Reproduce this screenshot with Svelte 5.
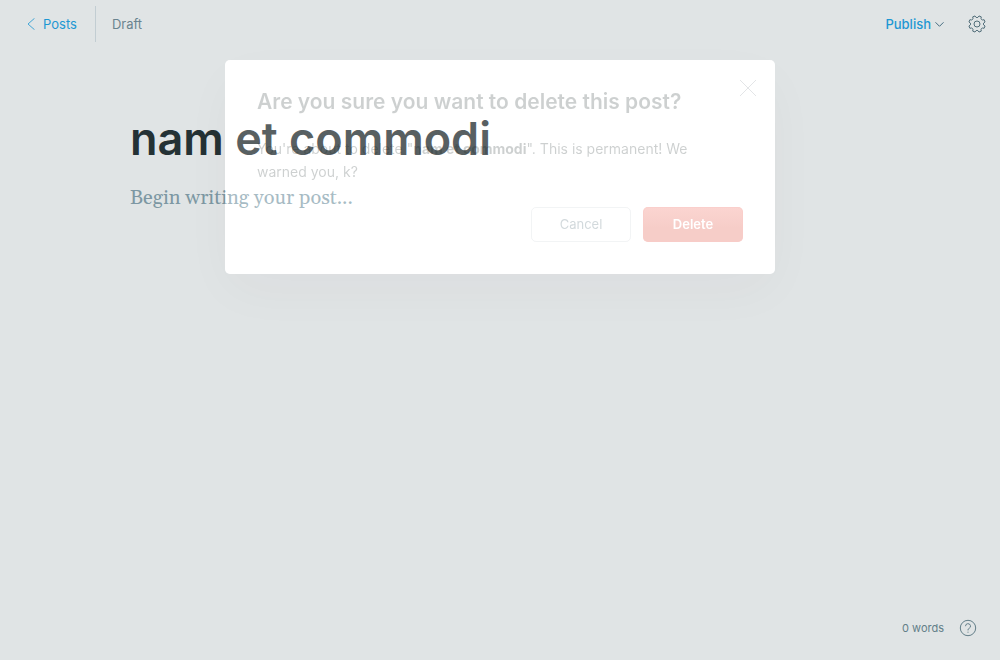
<script lang="ts">
  let title = $state('nam et commodi');
  let body = $state('');
  let open = $state(true);
  const words = $derived(body.trim() ? body.trim().split(/\s+/).length : 0);
  const close = () => (open = false);
</script>

<div class="editor">
  <header>
    <a class="back" href="#posts">
      <svg width="8" height="12" viewBox="0 0 8 12" aria-hidden="true"><path d="M7.500.3 1 6l6.500 5.700" /></svg>
      Posts
    </a>
    <span class="status">Draft</span>
    <button class="publish" type="button">
      Publish
      <svg width="9" height="6" viewBox="0 0 9 6" aria-hidden="true"><path d="m.5 1.300 4 4 4-4" /></svg>
    </button>
    <button class="settings" type="button" aria-label="Settings">
      <svg width="18" height="18" viewBox="-9 -9 18 18" aria-hidden="true">
        <path stroke-linejoin="round" d="M6.630-.93 8.050-2.010 7.110-4.270 5.350-4.030Q4.300-4.300 4.030-5.350L4.270-7.110 2.010-8.050.93-6.630Q0-6.100-.93-6.630L-2.010-8.050-4.270-7.110-4.030-5.350Q-4.300-4.300-5.350-4.030L-7.110-4.270-8.050-2.010-6.630-.93Q-6.100 0-6.630.93L-8.050 2.010-7.110 4.270-5.350 4.030Q-4.300 4.300-4.030 5.350L-4.270 7.110-2.010 8.050-.93 6.630Q0 6.100.93 6.630L2.010 8.050 4.270 7.110 4.030 5.350Q4.300 4.300 5.350 4.030L7.110 4.270 8.050 2.010 6.630.93Q6.100 0 6.630-.93Z" />
        <circle r="3" />
      </svg>
    </button>
  </header>

  <main>
    <input class="title" aria-label="Post title" bind:value={title} />
    <textarea class="body" aria-label="Post body" placeholder="Begin writing your post..." bind:value={body}></textarea>
  </main>

  <footer>
    <span>{words} words</span>
    <a href="#help" aria-label="Help">
      <svg width="18" height="18" viewBox="0 0 18 18" aria-hidden="true">
        <circle cx="9" cy="9" r="7.700" />
        <path d="M6.500 7.200a2.500 2.500 0 1 1 3.600 2.200c-.8.4-1.100.8-1.100 1.500v.5M9 12.700v1" />
      </svg>
    </a>
  </footer>
</div>

{#if open}
  <div class="overlay">
    <div class="modal" role="dialog" aria-modal="true" aria-labelledby="modal-title">
      <button class="close" type="button" aria-label="Close" onclick={close}>
        <svg width="16" height="16" viewBox="0 0 16 16" aria-hidden="true"><path d="m0 0 16 16M16 0 0 16" /></svg>
      </button>
      <h1 id="modal-title">Are you sure you want to delete this post?</h1>
      <p>You're about to delete "<strong>{title}</strong>". This is permanent! We warned you, k?</p>
      <div class="actions">
        <button class="cancel" type="button" onclick={close}>Cancel</button>
        <button class="delete" type="button" onclick={close}>Delete</button>
      </div>
    </div>
  </div>
{/if}

<style>
  :global(body) {
    margin: 0;
    background: #fff;
    color: #142022;
    font-family: Inter, 'Open Sans', sans-serif;
    font-size: 13px;
  }
  * { box-sizing: border-box; }
  button, input, textarea { font: inherit; color: inherit; margin: 0; padding: 0; border: 0; background: none; outline: 0; }
  button { cursor: pointer; }
  svg { display: block; fill: none; stroke: currentColor; }
  .editor { display: flex; flex-direction: column; min-height: 100vh; }
  header { display: flex; align-items: center; height: 48px; padding: 0 14px 0 27px; }
  .back {
    display: flex; align-items: center; gap: 8px; height: 36px; padding-right: 18px;
    border-right: 1px solid #dae3e8; color: #0c9fe9; text-decoration: none;
  }
  .back svg { opacity: 0.8; }
  .status { flex: 1; padding-left: 16px; color: #6b8793; }
  .publish { display: flex; align-items: center; gap: 4px; color: #0c9fe9; font-weight: 500; }
  .publish svg { color: #3d6880; }
  .settings { margin-left: 24px; color: #4d6b78; }
  main { display: flex; flex: 1; flex-direction: column; width: 100%; max-width: 740px; margin: 0 auto; padding-top: 62px; }
  .title { width: 100%; height: 56px; font-size: 45px; font-weight: 600; }
  .body { flex: 1; width: 100%; margin-top: 16px; resize: none; font-family: Georgia, Gelasio, serif; font-size: 20px; line-height: 32px; }
  .body::placeholder { color: #839fac; opacity: 1; }
  footer { display: flex; align-items: center; justify-content: flex-end; gap: 15px; height: 64px; padding-right: 23px; font-size: 11px; color: #627f8b; }
  footer a { color: inherit; }

  .overlay { position: fixed; inset: 0; overflow: hidden; padding: 60px 20px; }
  .modal {
    position: relative; max-width: 550px; margin: 0 auto; padding: 29px 32px 32px; border-radius: 5px;
    background: rgba(255, 255, 255, 0.29);
    color: rgba(21, 32, 34, 0.21);
    box-shadow: 0 18px 50px -5px rgba(85, 25, 45, 0.04), 0 0 0 200vmax rgba(104, 124, 128, 0.205);
  }
  .close { position: absolute; top: 20px; right: 19px; color: rgba(80, 95, 105, 0.16); }
  h1 { margin: 0; padding-right: 32px; font-size: 21px; line-height: 26px; font-weight: 600; }
  p { margin: 22px 0 24px; padding-right: 32px; font-size: 14px; line-height: 23px; }
  strong { font-weight: 700; }
  .actions { display: flex; justify-content: flex-end; gap: 12px; }
  .actions button { width: 100px; height: 35px; padding-bottom: 1px; border-radius: 5px; }
  .cancel { border: 1px solid rgba(130, 145, 155, 0.1); color: rgba(80, 110, 120, 0.26); }
  .actions .delete { background: linear-gradient(#fbd5d1, #f6cdc8 60%); box-shadow: inset 0 0 0 1px rgba(250, 204, 200, 0.6); color: #fff; font-weight: 600; }
</style>
